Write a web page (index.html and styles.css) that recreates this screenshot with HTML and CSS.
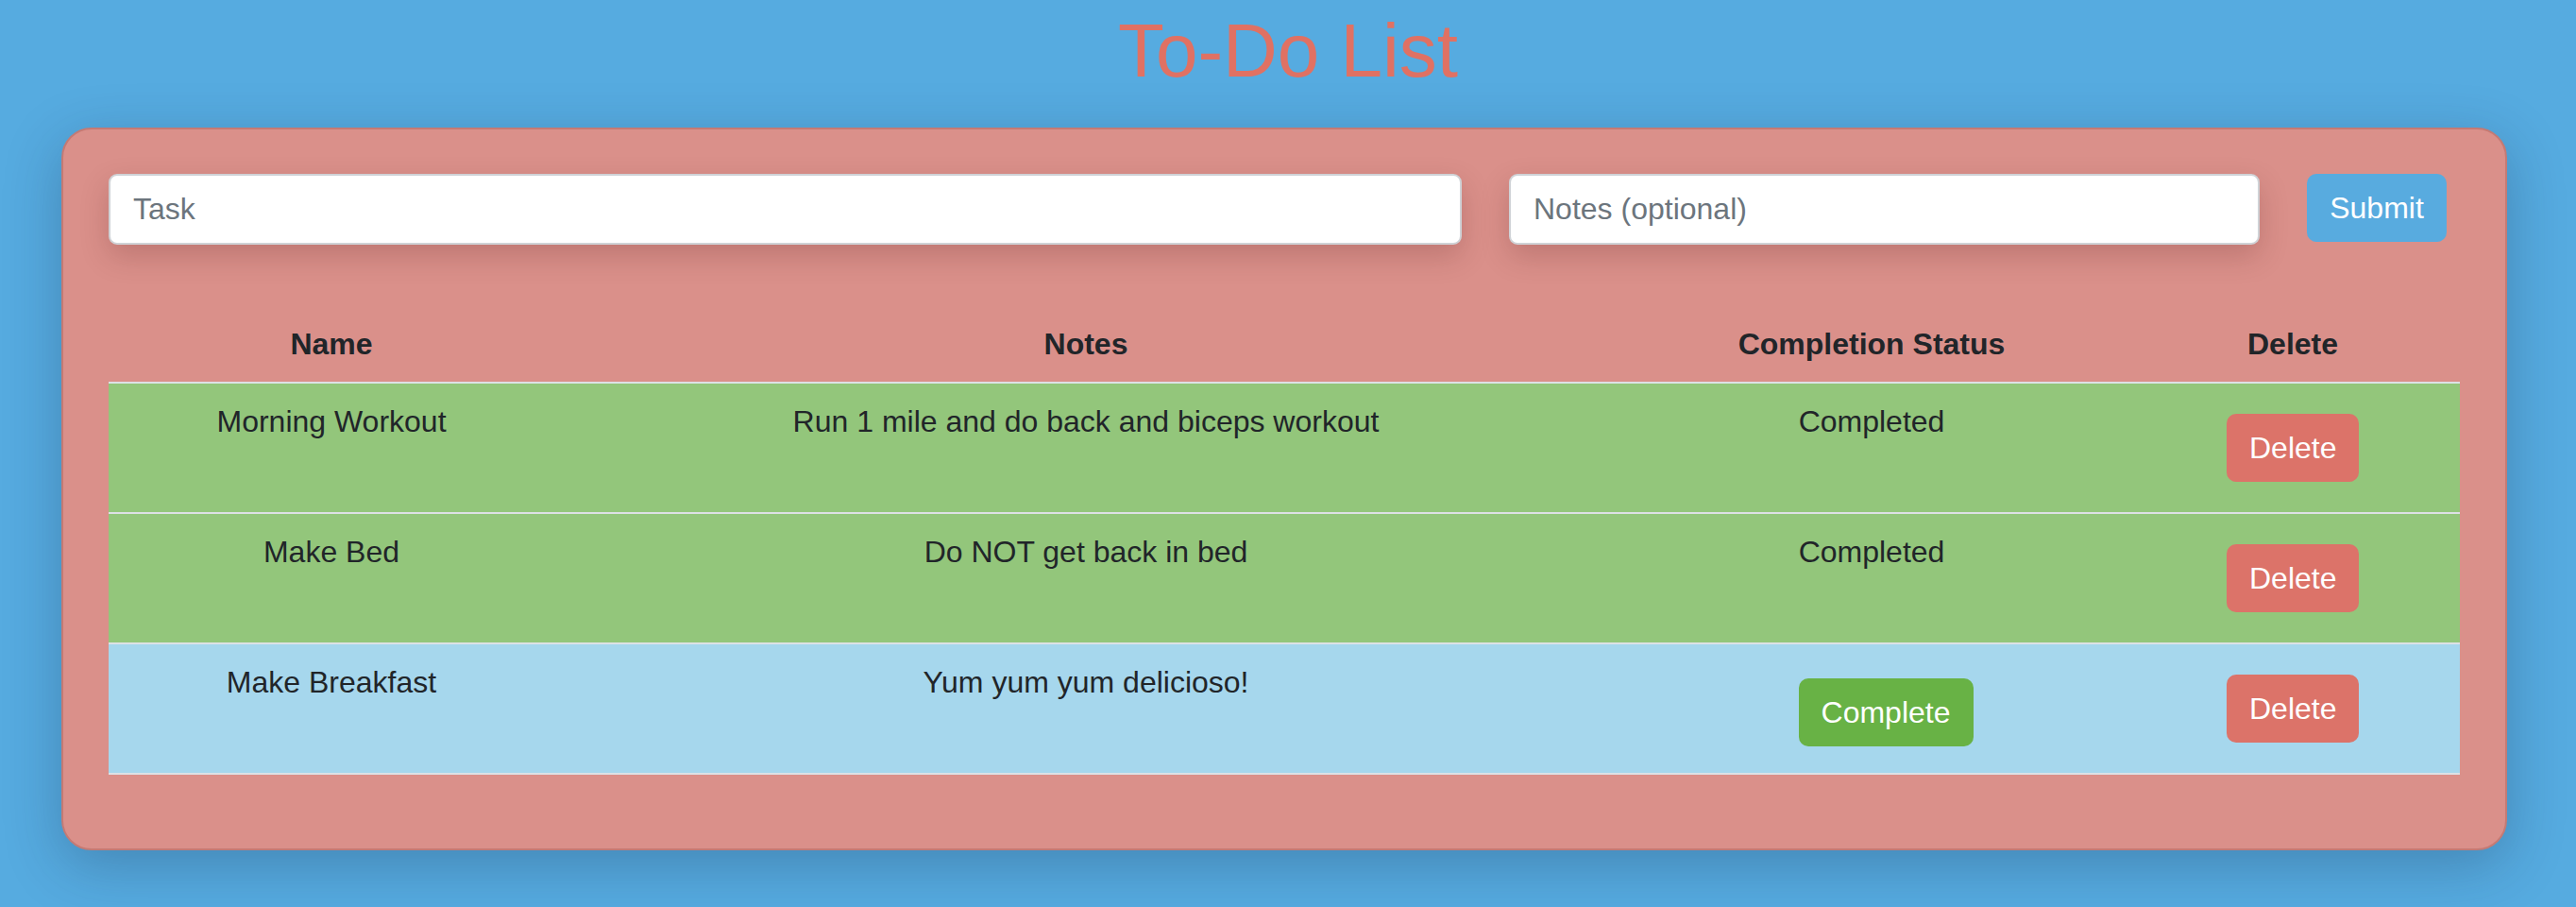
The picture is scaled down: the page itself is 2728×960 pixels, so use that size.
FILE: index.html
```html
<!DOCTYPE html>
<html lang="en">
<head>
<meta charset="utf-8">
<title>To-Do List</title>
<link rel="stylesheet" href="styles.css">
</head>
<body>
  <h1 class="title">To-Do List</h1>
  <main class="card">
    <form class="entry-form">
      <input class="field field-task" type="text" placeholder="Task">
      <input class="field field-notes" type="text" placeholder="Notes (optional)">
      <button class="btn btn-submit" type="button">Submit</button>
    </form>
    <table class="todo-table">
      <colgroup>
        <col class="col-name">
        <col class="col-notes">
        <col class="col-status">
        <col class="col-delete">
      </colgroup>
      <thead>
        <tr>
          <th>Name</th>
          <th>Notes</th>
          <th>Completion Status</th>
          <th>Delete</th>
        </tr>
      </thead>
      <tbody>
        <tr class="row-done">
          <td>Morning Workout</td>
          <td>Run 1 mile and do back and biceps workout</td>
          <td>Completed</td>
          <td class="cell-delete"><button class="btn btn-delete" type="button">Delete</button></td>
        </tr>
        <tr class="row-done">
          <td>Make Bed</td>
          <td>Do NOT get back in bed</td>
          <td>Completed</td>
          <td class="cell-delete"><button class="btn btn-delete" type="button">Delete</button></td>
        </tr>
        <tr class="row-open">
          <td>Make Breakfast</td>
          <td>Yum yum yum delicioso!</td>
          <td><button class="btn btn-complete" type="button">Complete</button></td>
          <td class="cell-delete"><button class="btn btn-delete" type="button">Delete</button></td>
        </tr>
      </tbody>
    </table>
  </main>
</body>
</html>
```
FILE: styles.css
```css
* {
  box-sizing: border-box;
}

html, body {
  margin: 0;
  padding: 0;
}

body {
  background: #56abe0;
  font-family: "Liberation Sans", Arial, Helvetica, sans-serif;
  color: #212529;
  font-size: 32px;
  line-height: 48px;
  min-height: 960px;
}

.title {
  margin: 0;
  padding-top: 6px;
  font-size: 80px;
  line-height: 96px;
  font-weight: 400;
  text-align: center;
  color: #e07163;
}

.card {
  width: 2590px;
  margin: 33px 0 0 65px;
  padding: 47px 48px 46px 48px;
  background: #da908a;
  border: 2px solid #c47a74;
  border-radius: 32px;
  box-shadow: 0 16px 60px rgba(20, 40, 70, 0.28);
}

.entry-form {
  display: flex;
  align-items: flex-start;
  gap: 50px;
  margin: 0 0 49px 0;
}

.field {
  height: 75px;
  padding: 0 24px;
  border: 2px solid #cfd2d6;
  border-radius: 9px;
  background: #fff;
  font-family: inherit;
  font-size: 32px;
  color: #495057;
  box-shadow: 0 12px 30px rgba(90, 30, 30, 0.22);
  outline: none;
}

.field::placeholder {
  color: #6c757d;
}

.field-task {
  width: 1433px;
}

.field-notes {
  width: 795px;
}

.btn {
  display: inline-block;
  height: 72px;
  padding: 12px 24px;
  border: 0;
  border-radius: 10px;
  font-family: inherit;
  font-size: 32px;
  line-height: 48px;
  color: #fff;
  cursor: pointer;
}

.btn-submit {
  width: 148px;
  background: #58abdf;
}

.btn-delete {
  width: 140px;
  background: #dc7369;
}

.btn-complete {
  width: 185px;
  margin: 20px 0 0 30px;
  background: #68b245;
}

.todo-table {
  width: 2490px;
  table-layout: fixed;
  border-collapse: collapse;
  margin-bottom: 32px;
}

.col-name { width: 472px; }
.col-notes { width: 1126px; }
.col-status { width: 538px; }
.col-delete { width: 354px; }

.todo-table th {
  padding: 32px 24px 16px;
  font-weight: 700;
  text-align: center;
  line-height: 48px;
}

.todo-table td {
  padding: 16px 24px;
  text-align: center;
  vertical-align: top;
  border-top: 2px solid #dde1e5;
}

.todo-table tbody tr:last-child td {
  border-bottom: 2px solid #dde1e5;
}

.todo-table td.cell-delete {
  padding: 32px 24px;
  vertical-align: middle;
}

.row-done td {
  background: #93c67b;
}

.row-open td {
  background: #a6d7ed;
}
```
